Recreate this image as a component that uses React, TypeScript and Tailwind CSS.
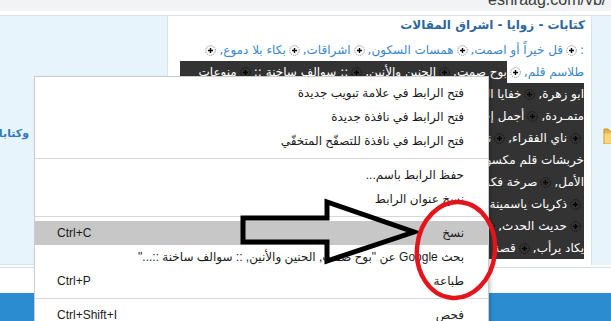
import React from "react";

function PlusIcon({ dark }: { dark?: boolean }) {
  return (
    <svg width="11" height="11" viewBox="0 0 11 11" className="inline-block align-middle mx-[3px] shrink-0">
      <circle cx="5.5" cy="5.5" r="4.8" fill="none" stroke={dark ? "#0c0c0c" : "#777"} strokeWidth="1" strokeDasharray="1 1" />
      <path d="M5.5 3v5M3 5.5h5" stroke="#000" strokeWidth="1.4" />
    </svg>
  );
}

const darkLines: React.ReactNode[] = [
  <>ابو زهرة,<PlusIcon dark />خفايا الروح,<PlusIcon dark />همس القلوب</>,
  <>متمـردة,<PlusIcon dark />أجمل إحساس,<PlusIcon dark />وجع الذكرى</>,
  <><PlusIcon dark />ناي الفقراء,<PlusIcon dark />نبض الحروف,<PlusIcon dark />ضفاف</>,
  <>خربشات قلم مكسور,<PlusIcon dark />شواطئ الأمل</>,
  <>الأمل,<PlusIcon dark />صرخة فكر,<PlusIcon dark />نور القمر,<PlusIcon dark />صدى</>,
  <><PlusIcon dark />ذكريات ياسمينة,<PlusIcon dark />عبق الورد</>,
  <><PlusIcon dark />حديث الحدث,<PlusIcon dark />خواطر عابرة,<PlusIcon dark />مدى</>,
  <>يكاد يرأب,<PlusIcon dark />قصة قصيرة,<PlusIcon dark />نفحات</>,
];

function MenuItem({ label, shortcut, active }: { label: string; shortcut?: string; active?: boolean }) {
  return (
    <div className={active ? "flex items-center justify-between h-[24px] pl-[22px] pr-[24px] bg-[#c7c7c7]" : "flex items-center justify-between h-[24px] pl-[22px] pr-[24px]"}>
      <span className="text-[12px] text-[#1b1b1b]">{shortcut ?? ""}</span>
      <span dir="rtl" className="text-[12px] text-[#1b1b1b] whitespace-nowrap">{label}</span>
    </div>
  );
}

function Sep() {
  return (
    <div className="h-[10px] flex items-center">
      <div className="h-px w-full bg-[#d6d6d6]" />
    </div>
  );
}

export default function App() {
  return (
    <div className="relative w-[611px] h-[321px] overflow-hidden bg-white font-['Liberation_Sans','DejaVu_Sans',sans-serif]">
      {/* browser bar */}
      <div className="h-[11px] bg-[#f1f3f4] overflow-hidden">
        <div className="pl-[488px] -mt-[8px] text-[16px] leading-[16px] text-[#3c3c3c] whitespace-nowrap">eshraag.com/vb/</div>
      </div>
      <div className="h-[5px] bg-white border-b border-[#dbe0e5]" />

      {/* main row */}
      <div className="flex h-[249px]">
        <div className="w-[168px] bg-[#e8f4fc] border-r border-b border-[#d3e3ef] flex flex-col">
          <div className="h-[110px]" />
          <div className="w-[29px] overflow-hidden flex justify-end">
            <span dir="rtl" className="whitespace-nowrap text-[11px] font-bold text-[#2f79b8] leading-[16px] font-['DejaVu_Sans',sans-serif]">وكتابات أدبية</span>
          </div>
        </div>

        <div className="flex-1 flex flex-col font-['DejaVu_Sans',sans-serif]" dir="rtl">
          <div className="h-[14px] leading-[18px] pr-[6px] text-[12px] font-bold text-[#2b679e] whitespace-nowrap">
            كتابات - زوايا - اشراق المقالات
          </div>
          <div className="h-[9px]" />
          <div className="h-[22px] leading-[22px] pr-[7px] text-[12px] text-[#3a87c8] whitespace-nowrap overflow-hidden flex items-center">
            <span>:</span>
            <PlusIcon />
            <span>قل خيراً أو اصمت,</span>
            <PlusIcon />
            <span>همسات السكون,</span>
            <PlusIcon />
            <span>اشراقات,</span>
            <PlusIcon />
            <span>بكاء بلا دموع,</span>
            <PlusIcon />
          </div>
          <div className="h-[22px] pr-[7px] pl-[12px] flex items-center text-[12px] whitespace-nowrap">
            <div className="h-full flex items-center text-[#3a87c8] shrink-0">
              <span>طلاسم قلم,</span>
              <PlusIcon />
            </div>
            <div className="h-full flex-1 bg-[#333] text-white flex items-center overflow-hidden">
              <span>بوح صمت,</span>
              <PlusIcon dark />
              <span>الحنين والأنين,</span>
              <PlusIcon dark />
              <span>:: سوالف ساخنة ::</span>
              <PlusIcon dark />
              <span>منوعات</span>
            </div>
          </div>
          {darkLines.map((l, i) => (
            <div key={i} className="h-[22px] mr-[7px] ml-[12px] bg-[#333] text-white text-[12px] whitespace-nowrap overflow-hidden flex items-center">
              {l}
            </div>
          ))}
        </div>

        <div className="w-[20px] bg-[#e8f4fc] border-l border-[#d3e3ef] flex flex-col">
          <div className="h-[111px]" />
          <svg width="19" height="17" viewBox="0 0 19 17" className="block">
            <path d="M12 2h4l1.5 2H22v13H12z" fill="#eab54a" stroke="#c8922d" strokeWidth="1" />
            <path d="M12.5 6.5h9v10h-9z" fill="#f8d57e" />
          </svg>
        </div>
      </div>

      {/* bottom */}
      <div className="h-[3px] border-b border-[#d5dde5]" />
      <div className="h-[25px] bg-white" />
      <div className="h-[30px] bg-[#2b8dd0]" />

      {/* context menu */}
      <div className="absolute left-[34px] top-[76px] w-[455px] h-[260px] bg-white border border-[#cccccc] shadow-[2px_2px_3px_rgba(0,0,0,0.18)] pt-[4px] font-['Liberation_Sans','DejaVu_Sans',sans-serif]">
        <MenuItem label="فتح الرابط في علامة تبويب جديدة" />
        <MenuItem label="فتح الرابط في نافذة جديدة" />
        <MenuItem label="فتح الرابط في نافذة للتصفّح المتخفّي" />
        <Sep />
        <MenuItem label="حفظ الرابط باسم..." />
        <MenuItem label="نسخ عنوان الرابط" />
        <Sep />
        <MenuItem label="نسخ" shortcut="Ctrl+C" active />
        <MenuItem label={'بحث Google عن "بوح صمت, الحنين والأنين, :: سوالف ساخنة ::..."'} />
        <MenuItem label="طباعة" shortcut="Ctrl+P" />
        <Sep />
        <MenuItem label="فحص" shortcut="Ctrl+Shift+I" />
      </div>

      {/* annotations */}
      <svg className="absolute left-0 top-0 pointer-events-none" width="611" height="321" viewBox="0 0 611 321">
        <polygon
          points="243,218 327,218 327,202 414,232 327,261 327,242 243,242"
          fill="none"
          stroke="#000"
          strokeWidth="5"
          strokeLinejoin="miter"
        />
        <ellipse cx="456" cy="250" rx="39" ry="48" fill="none" stroke="#e3141c" strokeWidth="4.5" transform="rotate(6 456 250)" />
      </svg>
    </div>
  );
}
